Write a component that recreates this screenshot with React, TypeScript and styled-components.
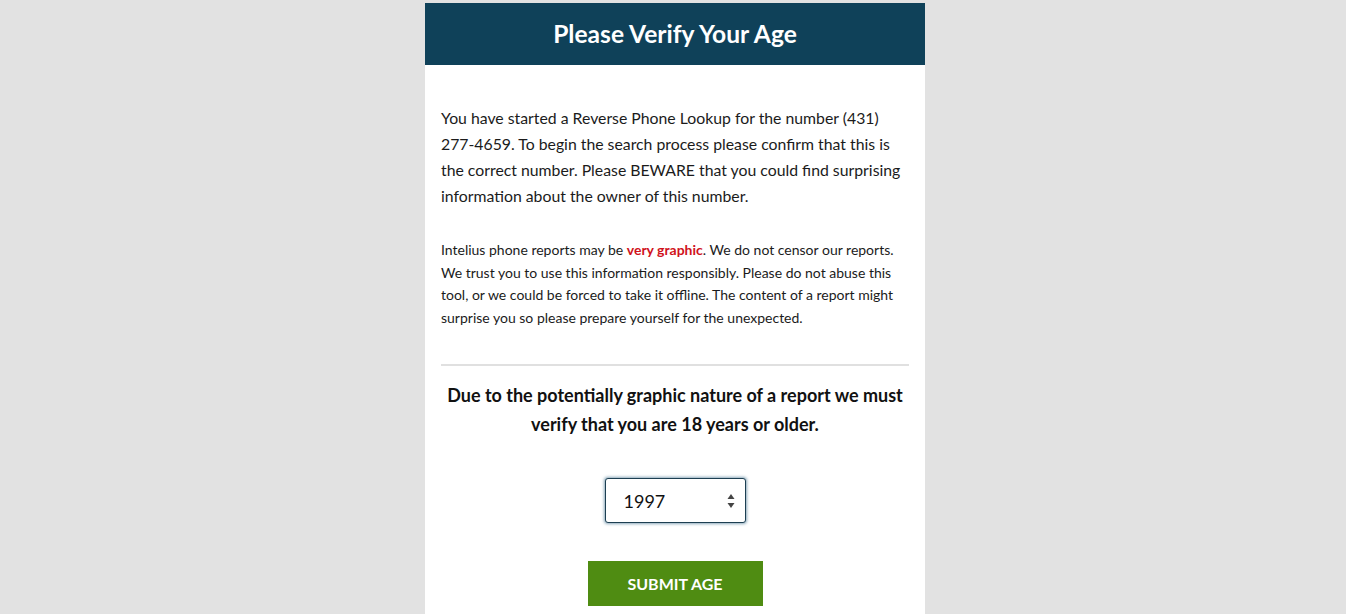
import React from "react";
import styled, { createGlobalStyle } from "styled-components";

const Global = createGlobalStyle`
  html, body { margin: 0; padding: 0; background: #e2e2e2; }
  body { font-family: Lato, "Open Sans", sans-serif; }
`;

const Page = styled.div`
  padding: 3px 0 0 4px;
`;

const Card = styled.div`
  width: 500px;
  margin: 0 auto;
  background: #fff;
  min-height: 611px;
`;

const Header = styled.div`
  height: 62px;
  background: #0f4159;
  display: flex;
  align-items: center;
  justify-content: center;
`;

const Title = styled.h1`
  margin: 0;
  font: 700 24.6px/1 Lato, sans-serif;
  color: #fff;
`;

const Body = styled.div`
  padding: 40px 16px 8px;
  display: flex;
  flex-direction: column;
`;

const Lead = styled.p`
  margin: 0;
  font-size: 15.8px;
  line-height: 26px;
  color: #1b1b1b;
`;

const Small = styled.p`
  margin: 30px 0 0;
  font-size: 14px;
  line-height: 22.5px;
  color: #1b1b1b;
`;

const Red = styled.span`
  color: #d0121b;
  font-weight: 700;
`;

const Divider = styled.hr`
  margin: 35px 0 0;
  border: 0;
  height: 2px;
  background: #e0e0e0;
`;

const Heading = styled.h2`
  margin: 15px 0 0;
  font-size: 18px;
  line-height: 29px;
  font-weight: 700;
  text-align: center;
  color: #111;
`;

const Center = styled.div<{ top: number }>`
  display: flex;
  justify-content: center;
  margin-top: ${(p) => p.top}px;
`;

const YearBox = styled.div`
  box-sizing: border-box;
  width: 141px;
  height: 45px;
  border: 1px solid #1d3f52;
  border-radius: 3px;
  box-shadow: 0 0 3px 1px rgba(60, 110, 140, 0.6);
  display: flex;
  align-items: center;
  justify-content: space-between;
  padding: 0 10px 0 18px;
  font-size: 18px;
  color: #111;
  background: #fff;
`;

const Button = styled.button`
  width: 175px;
  height: 45px;
  border: 0;
  background: #4f8c12;
  color: #fff;
  font: 700 16px Lato, sans-serif;
  text-transform: uppercase;
  cursor: pointer;
`;

export default function App() {
  return (
    <>
      <Global />
      <Page>
        <Card>
          <Header>
            <Title>Please Verify Your Age</Title>
          </Header>
          <Body>
            <Lead>
              You have started a Reverse Phone Lookup for the number (431) 277-4659. To begin the
              search process please confirm that this is the correct number. Please BEWARE that you
              could find surprising information about the owner of this number.
            </Lead>
            <Small>
              Intelius phone reports may be <Red>very graphic</Red>. We do not censor our reports. We
              trust you to use this information responsibly. Please do not abuse this tool, or we
              could be forced to take it offline. The content of a report might surprise you so please
              prepare yourself for the unexpected.
            </Small>
            <Divider />
            <Heading>
              Due to the potentially graphic nature of a report we must verify that you are 18 years
              or older.
            </Heading>
            <Center top={39}>
              <YearBox>
                <span>1997</span>
                <svg width="8" height="18" viewBox="0 0 8 18">
                  <path d="M4 2 L7.5 7 L0.5 7 Z" fill="#444" />
                  <path d="M4 16 L7.5 11 L0.5 11 Z" fill="#444" />
                </svg>
              </YearBox>
            </Center>
            <Center top={38}>
              <Button>Submit Age</Button>
            </Center>
          </Body>
        </Card>
      </Page>
    </>
  );
}
